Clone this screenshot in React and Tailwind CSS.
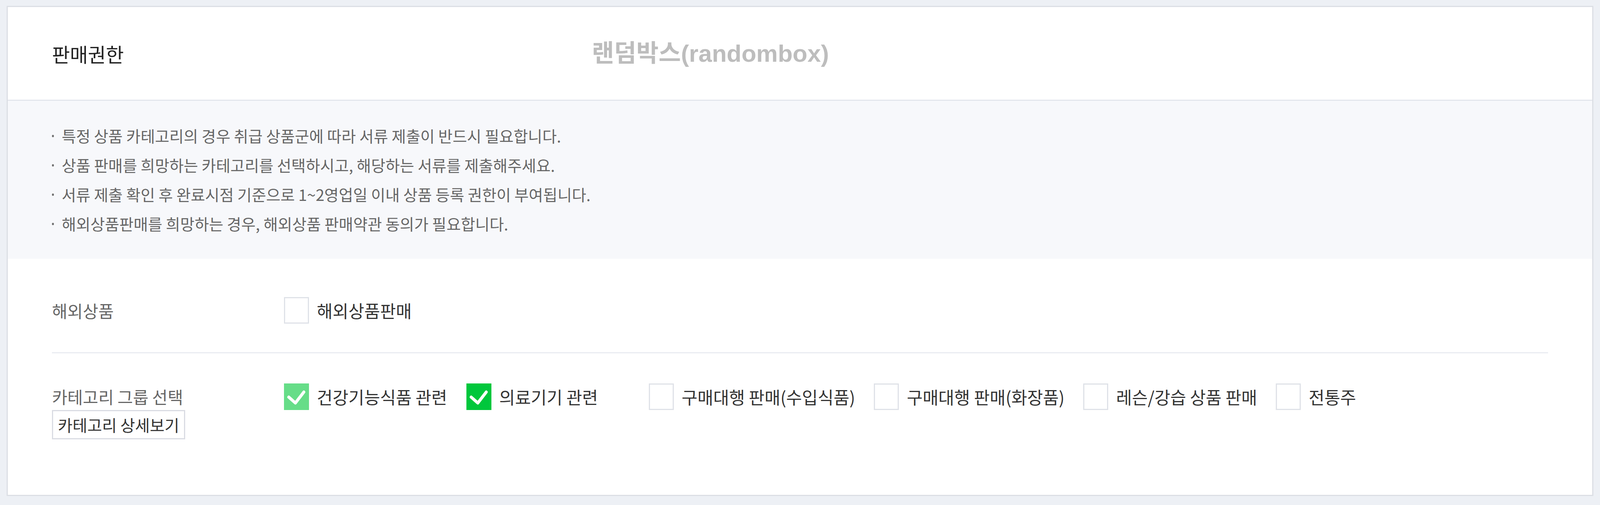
import React from "react";

const bullets = [
  "특정 상품 카테고리의 경우 취급 상품군에 따라 서류 제출이 반드시 필요합니다.",
  "상품 판매를 희망하는 카테고리를 선택하시고, 해당하는 서류를 제출해주세요.",
  "서류 제출 확인 후 완료시점 기준으로 1~2영업일 이내 상품 등록 권한이 부여됩니다.",
  "해외상품판매를 희망하는 경우, 해외상품 판매약관 동의가 필요합니다.",
];

const categories = [
  { label: "건강기능식품 관련", state: "light" },
  { label: "의료기기 관련", state: "on" },
  { label: "구매대행 판매(수입식품)", state: "off" },
  { label: "구매대행 판매(화장품)", state: "off" },
  { label: "레슨/강습 상품 판매", state: "off" },
  { label: "전통주", state: "off" },
];

function Check() {
  return (
    <svg viewBox="0 0 68 68" preserveAspectRatio="none" className="h-[68px] w-[64px]">
      <path
        d="M13 35 L31 50 L54 22"
        fill="none"
        stroke="#ffffff"
        strokeWidth="8"
        strokeLinecap="round"
        strokeLinejoin="round"
      />
    </svg>
  );
}

function Box({ state }) {
  if (state === "light") {
    return (
      <span className="flex h-[68px] w-[64px] shrink-0 items-center justify-center bg-[#66dd88]">
        <Check />
      </span>
    );
  }
  if (state === "on") {
    return (
      <span className="flex h-[68px] w-[64px] shrink-0 items-center justify-center bg-[#00c73c]">
        <Check />
      </span>
    );
  }
  return <span className="h-[68px] w-[64px] shrink-0 border-[3px] border-[#dfe2e8] bg-white" />;
}

export default function App() {
  return (
    <div className="min-h-screen bg-[#edf0f5] px-[17px] pb-[20px] pt-[15px] font-['Noto_Sans_CJK_KR',sans-serif]">
      <div className="border-[3px] border-[#dcdfe5] bg-white">
        <div className="flex h-[240px] items-center border-b-[3px] border-[#e4e7ed] px-[113px]">
          <span className="w-[1382px] shrink-0 text-[50px] leading-none text-[#222222]">판매권한</span>
          <span className="font-['Liberation_Sans','Noto_Sans_CJK_KR',sans-serif] text-[62px] font-bold leading-none text-[#bdbdbd]">
            랜덤박스(randombox)
          </span>
        </div>

        <ul className="bg-[#f7f8fb] px-[113px] py-[52px] text-[40px] leading-[75px] text-[#666666]">
          {bullets.map((t) => (
            <li key={t} className="flex items-center">
              <span className="mr-[20px] h-[6px] w-[5px] shrink-0 rounded-full bg-[#707070]" />
              {t}
            </li>
          ))}
        </ul>

        <div className="px-[113px] pb-[142px] pt-[98px]">
          <div className="flex h-[68px] items-center">
            <div className="w-[594px] shrink-0 text-[43px] text-[#666666]">해외상품</div>
            <label className="flex items-center gap-[20px] text-[44px] text-[#333333]">
              <Box state="off" />
              해외상품판매
            </label>
          </div>

          <div className="mt-[73px] h-[3px] bg-[#e9ecf1]" />

          <div className="mt-[76px] flex items-start">
            <div className="w-[594px] shrink-0">
              <div className="text-[43px] leading-[69px] text-[#666666]">카테고리 그룹 선택</div>
              <button className="flex h-[75px] w-[341px] items-center justify-center border-[3px] border-[#dadce3] bg-white text-[41px] leading-none text-[#333333]">
                카테고리 상세보기
              </button>
            </div>
            <div className="flex gap-[48px]">
              {categories.map((c) => (
                <label
                  key={c.label}
                  className="flex h-[69px] min-w-[419px] items-center gap-[20px] whitespace-nowrap text-[44px] text-[#333333]"
                >
                  <Box state={c.state} />
                  {c.label}
                </label>
              ))}
            </div>
          </div>
        </div>
      </div>
    </div>
  );
}
